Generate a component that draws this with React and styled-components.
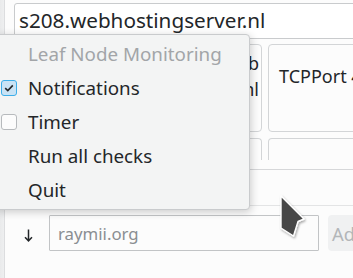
import React from "react";
import styled, { createGlobalStyle } from "styled-components";

const GlobalStyle = createGlobalStyle`
	html, body {
		margin: 0;
		padding: 0;
		background: #fcfcfc;
		font-family: "Noto Sans", "Open Sans", sans-serif;
		color: #232629;
	}
	* {
		box-sizing: border-box;
	}
`;

const menuItems = [
	{ label: "Notifications", check: true },
	{ label: "Timer", check: false },
	{ label: "Run all checks" },
	{ label: "Quit" },
];

export default function App() {
	return (
		<>
			<GlobalStyle />
			<Window>
				<LeftEdge />
				<Main>
					<UrlInput>s208.webhostingserver.nl</UrlInput>
					<CardGrid>
						<Card>
							<CardLabel $align="right">
								HTTP s208.web
								<br />
								hostingserver.nl
							</CardLabel>
						</Card>
						<Card>
							<CardLabel $align="right">
								Ping s208.web
								<br />
								hostingserver.nl
							</CardLabel>
						</Card>
						<Card>
							<CardLabel>TCPPort 443</CardLabel>
						</Card>
					</CardGrid>
					<CardGrid $row>
						<StubCard />
						<StubCard />
						<StubCard />
					</CardGrid>
					<Divider />
					<Divider $light $gap={35} />
					<AddRow>
						<Arrow>
							<svg width="9" height="13" viewBox="0 0 9 13">
								<path
									d="M4.5 0.5 V11.8 M1 8.2 L4.5 11.8 L8 8.2"
									fill="none"
									stroke="#232629"
									strokeWidth="1.5"
								/>
							</svg>
						</Arrow>
						<HostInput placeholder="raymii.org" />
						<AddButton disabled>Add</AddButton>
					</AddRow>
				</Main>

				<Menu>
					<MenuTitle>Leaf Node Monitoring</MenuTitle>
					{menuItems.map((item) => (
						<MenuItem key={item.label}>
							<CheckSlot>
								{item.check !== undefined && (
									<CheckBox $checked={item.check}>
										{item.check && (
											<svg width="12" height="12" viewBox="0 0 12 12">
												<path
													d="M2.2 6.2 L4.8 8.6 L9.8 3.4"
													fill="none"
													stroke="#232629"
													strokeWidth="1.6"
												/>
											</svg>
										)}
									</CheckBox>
								)}
							</CheckSlot>
							{item.label}
						</MenuItem>
					))}
				</Menu>

				<Cursor width="34" height="48" viewBox="0 0 34 48">
					<defs>
						<filter id="sh" x="-30%" y="-30%" width="160%" height="160%">
							<feDropShadow dx="1" dy="1.5" stdDeviation="1.2" floodOpacity="0.35" />
						</filter>
					</defs>
					<polygon
						points="4,3 27,26 21,28.5 16.5,43 4,35"
						fill="#474747"
						stroke="#ffffff"
						strokeWidth="1.4"
						strokeLinejoin="round"
						filter="url(#sh)"
					/>
				</Cursor>
			</Window>
		</>
	);
}

const Window = styled.div`
	position: relative;
	display: flex;
	width: 353px;
	height: 278px;
	overflow: hidden;
	background: #fcfcfc;
`;

const LeftEdge = styled.div`
	flex: 0 0 5px;
	background: linear-gradient(to right, #e9eaeb, #eeeff0);
	border-right: 1px solid #dcdddf;
`;

const Main = styled.div`
	display: flex;
	flex-direction: column;
	padding-left: 9px;
	min-width: 0;
	flex: 1;
`;

const UrlInput = styled.div`
	margin-top: 3px;
	width: 420px;
	height: 36px;
	border: 1px solid #c9cbcd;
	border-radius: 3px;
	background: #ffffff;
	padding-left: 4px;
	font-size: 20.7px;
	line-height: 32px;
	white-space: nowrap;
`;

const CardGrid = styled.div`
	display: grid;
	grid-template-columns: repeat(3, 121px);
	gap: 6px;
	margin-top: ${(p) => (p.$row ? "6px" : "5px")};
	height: ${(p) => (p.$row ? "22px" : "88px")};
`;

const Card = styled.div`
	display: flex;
	flex-direction: column;
	height: 88px;
	border: 1px solid #d3d5d7;
	border-radius: 4px;
	background: #fcfcfc;
	overflow: hidden;
`;

const CardLabel = styled.div`
	height: 62px;
	display: flex;
	flex-direction: column;
	justify-content: center;
	padding: 0 ${(p) => (p.$align === "right" ? "2px" : "10px")};
	text-align: ${(p) => p.$align || "left"};
	align-items: ${(p) => (p.$align === "right" ? "flex-end" : "flex-start")};
	font-size: 18px;
	line-height: 26px;
	white-space: nowrap;
`;

const StubCard = styled.div`
	height: 22px;
	border: 1px solid #d3d5d7;
	border-bottom: none;
	border-radius: 4px 4px 0 0;
`;

const Divider = styled.div`
	height: 1px;
	margin-left: -9px;
	margin-top: ${(p) => p.$gap || 9}px;
	background: ${(p) => (p.$light ? "#e3e4e5" : "#d6d7d9")};
`;

const AddRow = styled.div`
	display: flex;
	align-items: center;
	margin-top: 9px;
	padding-left: 8px;
	height: 36px;
	& > * {
		flex-shrink: 0;
	}
`;

const Arrow = styled.span`
	width: 27px;
	display: flex;
	padding-left: 2px;
	padding-top: 4px;
`;

const HostInput = styled.input`
	width: 270px;
	height: 36px;
	border: 1px solid #c2c4c6;
	border-radius: 1px;
	background: #fcfcfc;
	padding: 0 8px;
	font-family: "Noto Sans", sans-serif;
	font-size: 16.8px;
	color: #232629;
	outline: none;
	&::placeholder {
		color: #8a8e92;
	}
`;

const AddButton = styled.button`
	margin-left: 9px;
	width: 60px;
	height: 36px;
	border: none;
	border-radius: 4px;
	background: #f0f1f2;
	padding: 0 0 0 4px;
	text-align: left;
	font-family: "Noto Sans", sans-serif;
	font-size: 18.4px;
	color: #b3b6b9;
`;

const Menu = styled.div`
	position: absolute;
	left: -4px;
	top: 34px;
	width: 254px;
	height: 176px;
	padding-top: 2px;
	background: #f3f4f4;
	border: 1px solid #c9cbcd;
	border-radius: 4px;
	box-shadow: 1px 2px 9px rgba(0, 0, 0, 0.2);
`;

const MenuTitle = styled.div`
	height: 34px;
	line-height: 34px;
	padding-left: 31px;
	font-size: 18.8px;
	color: #a2a5a8;
`;

const MenuItem = styled.div`
	display: flex;
	align-items: center;
	height: 34px;
	font-size: 18.8px;
`;

const CheckSlot = styled.div`
	width: 31px;
	padding-left: 4px;
	display: flex;
	align-items: center;
`;

const CheckBox = styled.div`
	width: 16px;
	height: 16px;
	border-radius: 3px;
	display: flex;
	align-items: center;
	justify-content: center;
	border: 1px solid ${(p) => (p.$checked ? "#3daee9" : "#b7babd")};
	background: ${(p) => (p.$checked ? "#c9e3f5" : "#fcfcfc")};
`;

const Cursor = styled.svg`
	position: absolute;
	left: 277px;
	top: 193px;
`;
